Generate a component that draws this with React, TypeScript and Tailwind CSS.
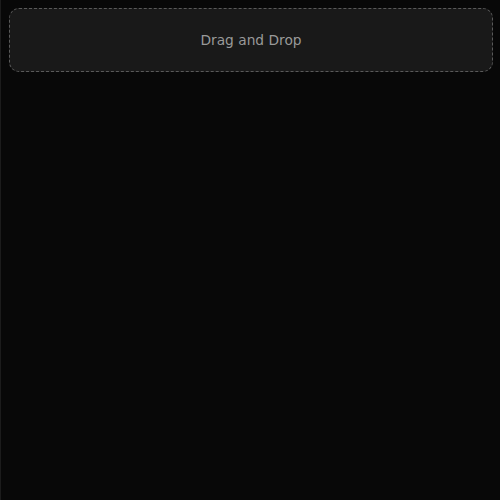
export default function App() {
    return (
        <div
            className="min-h-[500px] w-full bg-[#080808] border-l border-[#1c1c1c] pl-2 pr-[7px] pt-2"
            style={{ fontFamily: '"DejaVu Sans", sans-serif' }}
        >
            {/* Drop zone */}
            <div className="h-16 flex items-center justify-center rounded-[10px] border border-dashed border-[#5a5a5a] bg-[#191919]">
                <span className="text-[13.75px] text-[#999999]">Drag and Drop</span>
            </div>
        </div>
    );
}
